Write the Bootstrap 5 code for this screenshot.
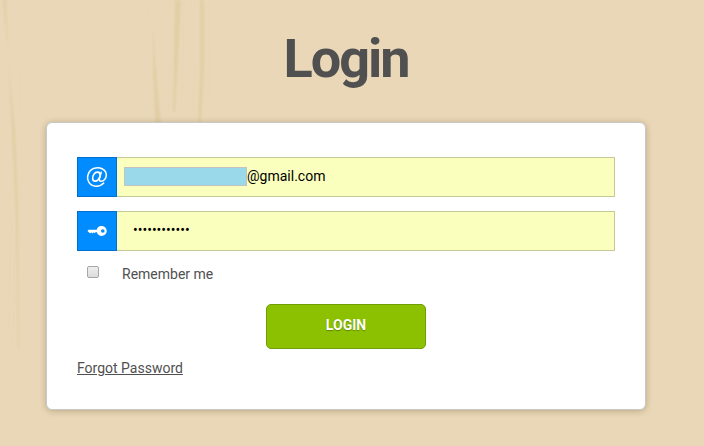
<!DOCTYPE html>
<html lang="en">
<head>
<meta charset="utf-8">
<meta name="viewport" content="width=device-width, initial-scale=1">
<title>Login</title>
<link href="https://cdn.jsdelivr.net/npm/bootstrap@5.3.0/dist/css/bootstrap.min.css" rel="stylesheet">
<style>
  body { background: #e9d7b7; font-family: Roboto, sans-serif; font-size: 14px; color: #505050; height: 446px; overflow: hidden; }
  .grain { z-index: -1; }
  .page { width: 600px; margin-left: 46px; }
  .page-title { font-size: 54px; line-height: 60px; font-weight: 700; letter-spacing: -2px; color: #505050; padding-top: 29px; margin-bottom: 33px; }
  .login-card { height: 288px; border: 1px solid #c8c8c8; border-radius: 6px; box-shadow: 0 1px 6px rgba(90,65,25,.32); padding: 34px 30px 0; }
  .field { height: 40px; margin-bottom: 14px; }
  .field .input-group-text { width: 40px; padding: 0; background: #008cff; border: 1px solid #0071ce; border-radius: 0; color: #fff; }
  .field .form-control, .field .form-control:focus { background: #faffbd; border: 1px solid #c5c897; border-left: 0; border-radius: 0; color: #000; font-size: 14px; padding: 0 16px 2px; box-shadow: none; margin-left: 0 !important; }
  .field .form-control.email { padding-left: 130px; }
  .mask { left: 48px; top: 10px; width: 123px; height: 19px; background: #99d9ea; border: 1px solid #c3c3c3; z-index: 6; }
  .remember { height: 20px; margin-bottom: 19px; line-height: 19px; }
  .tick { appearance: none; width: 12px; height: 12px; margin: 1px 23px 0 10px; border: 1px solid #a6a6a6; border-radius: 2px; background: linear-gradient(#eee, #dcdcdc); }
  .btn-login, .btn-login:hover { width: 160px; height: 45px; background: #8bc100; border: 1px solid #719d06; border-radius: 5px; color: #fff; font-size: 14px; font-weight: 700; padding: 0 0 3px; text-shadow: 0 1px 1px rgba(0,0,0,.3); }
  .forgot { color: #505050; line-height: 20px; margin-top: 9px; }
</style>
</head>
<body>
<svg class="grain position-absolute top-0 start-0" width="704" height="446" aria-hidden="true">
  <defs><filter id="soft"><feGaussianBlur stdDeviation=".8"/></filter></defs>
  <g fill="#e2cfa6" filter="url(#soft)">
    <path d="M3 0H6L8 40L8.500 57L7 40Z"/>
    <path d="M8 60L11 90L15 130L18 205L19 350H18L16 220L12 130Z"/>
    <path d="M153 24L155 60L161 123H155L153 70Z"/>
    <path d="M175 0H181L178 60L175 112H173L174 50Z"/>
    <path d="M200 0H204L204 70L201 123H198L200 70Z"/>
  </g>
  <g fill="none" stroke="#e5d3ae" stroke-width=".6" opacity=".6">
    <path d="M147 8L150 24M170 62L168 112M184 0L182 95M195 65L193 110M209 0L210 100M12 220L9 290L10 345M15 230L13 345M19 72L20 110"/>
  </g>
</svg>
<main class="page">
  <h1 class="page-title text-center">Login</h1>
  <form class="login-card card d-block">
    <div class="field input-group position-relative">
      <span class="input-group-text justify-content-center">
        <svg width="22" height="22" viewBox="0 0 22 22" fill="none" stroke="#fff" stroke-linecap="round" stroke-linejoin="round">
          <path stroke-width="1.500" d="M17.700 17C13.500 21.600 6 21.200 3 16.400C-.2 11.200 2.500 4.200 8.300 2.300C14 .4 20.300 3.800 20.300 9C20.300 12.600 17.700 15.200 15 15.200C13.300 15.200 13.100 14 13.500 12.400L15.200 6.200"/>
          <path stroke-width="1.700" d="M14.300 9.200C14 5.100 9.800 5.400 8 8.100C6 11 6.100 15.100 9 15.100C11.400 15.100 13.400 12.700 14.300 9.200Z"/>
        </svg>
      </span>
      <input class="form-control email" type="text" value="@gmail.com" aria-label="Email">
      <span class="mask position-absolute"></span>
    </div>
    <div class="field input-group">
      <span class="input-group-text justify-content-center">
        <svg width="20" height="12" viewBox="0 0 20 12">
          <path fill="#fff" fill-rule="evenodd" d="M14.200 1A5 5 0 1 1 9.900 7.300L8.500 7.300L7.700 8.200L6.800 7.300L5.600 8.400L4.500 7.400L3.200 8.200L2 7.400L.5 6L1.500 4.800H9.700A5 5 0 0 1 14.200 1ZM15.800 4.200A1.800 1.800 0 1 0 15.800 7.800A1.800 1.800 0 0 0 15.800 4.200Z"/>
        </svg>
      </span>
      <input class="form-control" type="password" value="abcdefghijkl" aria-label="Password">
    </div>
    <label class="remember d-flex">
      <input class="tick" type="checkbox"><span>Remember me</span>
    </label>
    <div class="text-center"><button class="btn btn-login" type="button">LOGIN</button></div>
    <div class="forgot"><a class="text-reset text-decoration-underline" href="#">Forgot Password</a></div>
  </form>
</main>
<script src="https://cdn.jsdelivr.net/npm/bootstrap@5.3.0/dist/js/bootstrap.bundle.min.js"></script>
</body>
</html>
